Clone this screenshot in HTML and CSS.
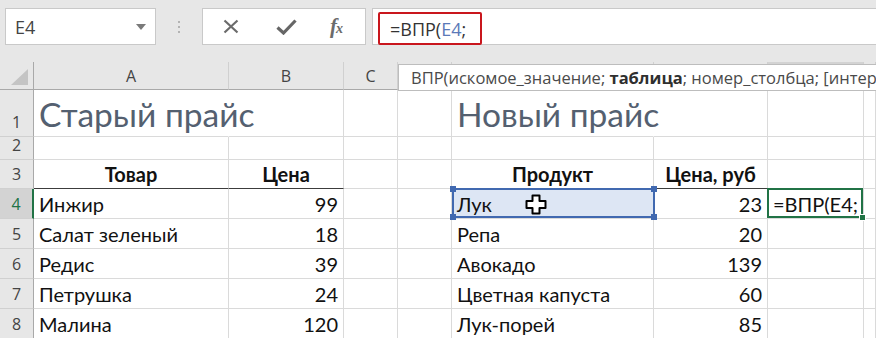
FILE: index.html
```html
<!DOCTYPE html>
<html lang="ru">
<head>
<meta charset="utf-8">
<title>ВПР</title>
<link rel="stylesheet" href="styles.css">
</head>
<body>
<div class="app">
  <div class="toolbar">
    <div class="namebox">
      <span>E4</span>
      <svg class="caret" width="10" height="6" viewBox="0 0 10 6"><path d="M0 0H10L5 6Z" fill="#7a7a7a"/></svg>
    </div>
    <div class="grip"><i></i><i></i><i></i></div>
    <div class="btns">
      <svg class="ic-x" width="16" height="15" viewBox="0 0 16 15"><path d="M1.5 1.5L14.5 13.5M14.5 1.5L1.5 13.5" stroke="#6b6b6b" stroke-width="2.2" fill="none"/></svg>
      <svg class="ic-ok" width="21" height="16" viewBox="0 0 21 16"><path d="M1.5 8.5L7.5 14L19.5 1.5" stroke="#666" stroke-width="3.2" fill="none"/></svg>
      <span class="fx">f<span class="fx-x">x</span></span>
    </div>
    <div class="formula">
      <div class="edit">=ВПР(<span class="ref">E4</span>;</div>
    </div>
  </div>

  <div class="sheet">
    <div class="ch corner"><svg width="18" height="16" viewBox="0 0 18 16"><path d="M17 0V16H0Z" fill="#c4c4c4"/></svg></div>
    <div class="ch">A</div><div class="ch">B</div><div class="ch">C</div><div class="ch">D</div>
    <div class="ch">E</div><div class="ch">F</div><div class="ch ch-act">G</div><div class="ch">H</div>

    <div class="rh">1</div>
    <div class="c spill"><span class="title">Старый прайс</span></div><div class="c"></div><div class="c"></div><div class="c"></div>
    <div class="c spill"><span class="title">Новый прайс</span></div><div class="c"></div><div class="c"></div><div class="c"></div>

    <div class="rh">2</div>
    <div class="c"></div><div class="c"></div><div class="c"></div><div class="c"></div>
    <div class="c"></div><div class="c"></div><div class="c"></div><div class="c"></div>

    <div class="rh">3</div>
    <div class="c hd">Товар</div><div class="c hd">Цена</div><div class="c"></div><div class="c"></div>
    <div class="c hd">Продукт</div><div class="c hd">Цена, руб</div><div class="c"></div><div class="c"></div>

    <div class="rh rh-act">4</div>
    <div class="c">Инжир</div><div class="c num">99</div><div class="c"></div><div class="c"></div>
    <div class="c refcell">Лук
      <span class="hdl tl"></span><span class="hdl tr"></span><span class="hdl bl"></span><span class="hdl br"></span>
      <svg class="cursor" width="22" height="21" viewBox="0 0 22 21"><path d="M7.5 1.5H14.5V7H20.5V14H14.5V19.5H7.5V14H1.5V7H7.5Z" fill="#fff" stroke="#000" stroke-width="2" stroke-linejoin="round"/></svg>
    </div>
    <div class="c num">23</div><div class="c active">=ВПР(E4;</div><div class="c"></div>

    <div class="rh">5</div>
    <div class="c">Салат зеленый</div><div class="c num">18</div><div class="c"></div><div class="c"></div>
    <div class="c">Репа</div><div class="c num">20</div><div class="c"></div><div class="c"></div>

    <div class="rh">6</div>
    <div class="c">Редис</div><div class="c num">39</div><div class="c"></div><div class="c"></div>
    <div class="c">Авокадо</div><div class="c num">139</div><div class="c"></div><div class="c"></div>

    <div class="rh">7</div>
    <div class="c">Петрушка</div><div class="c num">24</div><div class="c"></div><div class="c"></div>
    <div class="c">Цветная капуста</div><div class="c num">60</div><div class="c"></div><div class="c"></div>

    <div class="rh">8</div>
    <div class="c">Малина</div><div class="c num">120</div><div class="c"></div><div class="c"></div>
    <div class="c">Лук-порей</div><div class="c num">85</div><div class="c"></div><div class="c"></div>
  </div>

  <div class="tip">ВПР(искомое_значение;&nbsp;<b>таблица</b>; номер_столбца; [интервальный_просмотр])</div>
</div>
</body>
</html>
```

FILE: styles.css
```css
html, body {
  margin: 0;
  padding: 0;
}
body {
  width: 876px;
  height: 338px;
  overflow: hidden;
  background: #e7e7e7;
  font-family: "Open Sans", "Noto Sans", sans-serif;
}
.app {
  position: relative;
  width: 876px;
  height: 338px;
  overflow: hidden;
}

/* ---------- formula bar ---------- */
.toolbar {
  height: 62px;
  box-sizing: border-box;
  padding: 8px 0 0 5px;
  display: flex;
  align-items: flex-start;
  background: #e7e7e7;
}
.namebox {
  width: 151px;
  height: 37px;
  box-sizing: border-box;
  background: #fff;
  border: 1px solid #c9c9c9;
  display: flex;
  align-items: center;
  justify-content: space-between;
  padding: 0 9px 0 9px;
  font-size: 18px;
  color: #444;
}
.grip {
  width: 46px;
  height: 37px;
  display: flex;
  flex-direction: column;
  align-items: center;
  justify-content: center;
  gap: 3px;
}
.grip i {
  display: block;
  width: 2px;
  height: 2px;
  background: #b3b3b3;
}
.btns {
  width: 164px;
  height: 37px;
  box-sizing: border-box;
  background: #fff;
  border: 1px solid #c9c9c9;
  display: flex;
  align-items: center;
}
.ic-x { margin-left: 20px; }
.ic-ok { margin-left: 37px; }
.fx {
  margin-left: 33px;
  font-family: "Liberation Serif", serif;
  font-style: italic;
  font-weight: bold;
  font-size: 21px;
  color: #6b6b6b;
  line-height: 1;
  letter-spacing: -1px;
}
.fx-x {
  font-size: 14px;
}
.formula {
  margin-left: 6px;
  flex: 1;
  height: 37px;
  box-sizing: border-box;
  background: #fff;
  border: 1px solid #c9c9c9;
  border-right: none;
  padding: 3px 0 0 5px;
}
.edit {
  width: 104px;
  height: 33px;
  box-sizing: border-box;
  border: 2px solid #c9161d;
  border-radius: 2px;
  display: flex;
  align-items: center;
  padding-left: 10px;
  font-size: 18px;
  color: #333;
  white-space: nowrap;
}
.edit .ref {
  color: #5b79b8;
}

/* ---------- sheet ---------- */
.sheet {
  display: grid;
  grid-template-columns: 34px 195px 115px 54px 54px 202px 114px 96px 12px;
  grid-template-rows: 28px 47px 23px 29px 30px 30px 30px 30px 30px;
  background: #fff;
}
.ch {
  background: #e7e7e7;
  border-right: 1px solid #d0d0d0;
  border-bottom: 1px solid #a9a9a9;
  box-sizing: border-box;
  display: flex;
  align-items: center;
  justify-content: center;
  font-size: 16px;
  color: #444;
}
.ch.corner {
  justify-content: flex-end;
  align-items: flex-end;
  padding: 0 4px 4px 0;
  border-right: 1px solid #a9a9a9;
}
.ch-act {
  background: #d3d3d3;
  color: #217346;
  border-bottom: 2px solid #217346;
}
.rh {
  background: #e7e7e7;
  border-right: 1px solid #a9a9a9;
  border-bottom: 1px solid #d0d0d0;
  box-sizing: border-box;
  display: flex;
  align-items: flex-end;
  justify-content: center;
  font-size: 16px;
  line-height: 20px;
  padding-bottom: 4px;
  color: #444;
  overflow: hidden;
}
.rh-act {
  background: #d3d3d3;
  border-right: 2px solid #217346;
  color: #217346;
}
.c {
  position: relative;
  border-right: 1px solid #dadada;
  border-bottom: 1px solid #dadada;
  box-sizing: border-box;
  display: flex;
  align-items: flex-end;
  padding: 0 5px 3px 5px;
  font-family: "Lato", "Open Sans", sans-serif;
  font-size: 20px;
  line-height: 22px;
  color: #111;
  white-space: nowrap;
  min-width: 0;
}
.c.spill {
  border-right-color: transparent;
  z-index: 1;
}
.title {
  font-size: 33.5px;
  line-height: 38px;
  font-weight: 400;
  color: #546070;
}
.c.hd {
  justify-content: center;
  font-weight: bold;
  border-bottom: 1px solid #3c3c3c;
}
.c.num {
  justify-content: flex-end;
}
.c.refcell {
  background: #dde6f4;
}
.c.refcell::after {
  content: "";
  position: absolute;
  left: 0;
  top: -1px;
  right: -2px;
  bottom: 0;
  border: 2px solid #4169b0;
}
.hdl {
  position: absolute;
  width: 6px;
  height: 6px;
  background: #4169b0;
  z-index: 2;
}
.hdl.tl { left: -2px; top: -3px; }
.hdl.tr { right: -4px; top: -3px; }
.hdl.bl { left: -2px; bottom: -2px; }
.hdl.br { right: -4px; bottom: -2px; }
.cursor {
  position: absolute;
  left: 73px;
  top: 5px;
  z-index: 3;
}
.c.active::after {
  content: "";
  position: absolute;
  left: -1px;
  top: -1px;
  right: 0;
  bottom: 0;
  border: 2px solid #217346;
}
.c.active::before {
  content: "";
  position: absolute;
  right: -3px;
  bottom: -3px;
  width: 5px;
  height: 5px;
  background: #217346;
  border: 1px solid #fff;
  z-index: 2;
}

/* ---------- tooltip ---------- */
.tip {
  position: absolute;
  left: 398px;
  top: 64px;
  height: 27px;
  box-sizing: border-box;
  padding: 0 0 0 12px;
  width: 640px;
  background: #fff;
  border: 1px solid #bdbdbd;
  display: flex;
  align-items: center;
  font-size: 16.5px;
  color: #4a4a4a;
  white-space: pre;
  z-index: 5;
}
.tip b {
  color: #2f2f2f;
  font-weight: bold;
}
```
